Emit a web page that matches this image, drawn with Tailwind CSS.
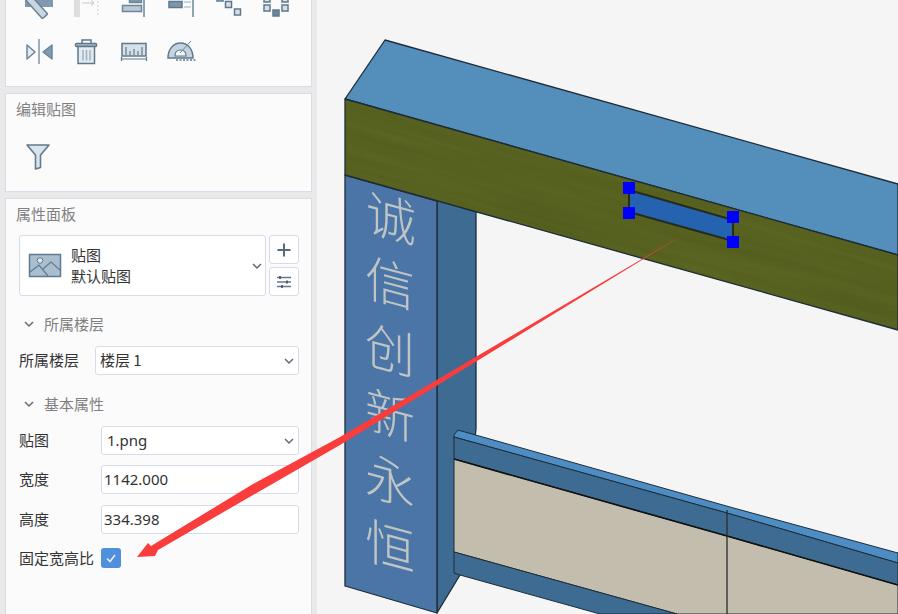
<!DOCTYPE html>
<html lang="zh">
<head>
<meta charset="utf-8">
<script src="https://cdn.jsdelivr.net/npm/@tailwindcss/browser@4"></script>
</head>
<body class="m-0 overflow-hidden">
<div class="flex w-[898px] h-[614px] overflow-hidden bg-[#f5f5f5] font-['Noto_Sans_CJK_SC','Noto_Sans',sans-serif] text-[15px] text-[#333]">
  <!-- left panels -->
  <aside class="w-[317px] shrink-0 h-full bg-[#e9e9e9] pl-[5px] pr-[5px] flex flex-col gap-[6px]">
    <section class="h-[87px] shrink-0 overflow-hidden bg-[#fbfbfc] border border-t-0 border-[#d6dce9]">
      <div class="-mt-[20px] pl-[9px] grid grid-cols-[repeat(6,47.5px)] auto-rows-[48px] place-items-center">
        <svg width="36" height="36" viewBox="21 -14 36 36" fill="none"><rect x="25" y="-3" width="28" height="10" fill="#7f9ab0"/><rect x="33" y="-5" width="7" height="25" rx="1" transform="rotate(-42 36 7)" fill="#c9d6e0" stroke="#6a8296" stroke-width="1.5"/></svg>
        <svg width="36" height="36" viewBox="68 -14 36 36" fill="none"><rect x="74" y="-3" width="6" height="20" fill="#dedede"/><path d="M82 3h12m-3-2.5 3 2.5-3 2.5" stroke="#c8c8c8"/><path d="M98 -3v20" stroke="#d0d0d0" stroke-dasharray="2 2"/></svg>
        <svg width="36" height="36" viewBox="115 -14 36 36" fill="none"><path d="M143 -3v20" stroke="#6d8699" stroke-width="1.5"/><rect x="121.500" y="5.500" width="19" height="6" fill="#b9c9d6" stroke="#6d8699" stroke-width="1.500"/><rect x="128.500" y="-3" width="12" height="5.500" fill="#7c97ad" stroke="#6d8699" stroke-width="1.500"/></svg>
        <svg width="36" height="36" viewBox="163 -14 36 36" fill="none"><rect x="169" y="1.500" width="13" height="6" fill="#7c97ad" stroke="#5f788c" stroke-width="1.500"/><path d="M184 2h7M184 7h7" stroke="#b9c9d6" stroke-width="1.500"/><path d="M193 -3v20" stroke="#6d8699" stroke-width="1.500"/></svg>
        <svg width="36" height="36" viewBox="211 -14 36 36" fill="none"><rect x="217" y="-4" width="6" height="5" fill="#d5e0e8" stroke="#5f788c" stroke-width="1.500"/><rect x="225.500" y="1.500" width="6" height="6" fill="#d5e0e8" stroke="#5f788c" stroke-width="1.500"/><rect x="234.500" y="9" width="6" height="6" fill="#d5e0e8" stroke="#5f788c" stroke-width="1.500"/></svg>
        <svg width="36" height="36" viewBox="258 -14 36 36" fill="none"><rect x="264" y="-4" width="6" height="6" fill="#d5e0e8" stroke="#5f788c" stroke-width="1.500"/><rect x="282" y="-4" width="6" height="6" fill="#d5e0e8" stroke="#5f788c" stroke-width="1.500"/><rect x="264" y="5" width="6" height="6" fill="#d5e0e8" stroke="#5f788c" stroke-width="1.500"/><rect x="282" y="5" width="6" height="6" fill="#d5e0e8" stroke="#5f788c" stroke-width="1.500"/><rect x="273" y="10" width="6" height="6" fill="#6d8699" stroke="#5f788c" stroke-width="1.500"/></svg>

        <svg width="36" height="36" viewBox="21 34 36 36" fill="none"><path d="M39 39v25" stroke="#7d96a9" stroke-width="1.500"/><path d="M27 45l8 7-8 7z" fill="#e4ebf0" stroke="#6d8699" stroke-width="1.500" stroke-linejoin="round"/><path d="M52 45l-9 7 9 7z" fill="#7f9ab0" stroke="#6d8699" stroke-width="1.500" stroke-linejoin="round"/></svg>
        <svg width="36" height="36" viewBox="68 34 36 36" fill="none"><path d="M82 43v-3h9v3" stroke="#5f788c" stroke-width="1.500"/><rect x="75.500" y="43.500" width="21" height="3" rx="1" fill="#a9bdcc" stroke="#5f788c" stroke-width="1.500"/><path d="M78 46.500h16.500v17h-16.500z" fill="#e2e9ef" stroke="#5f788c" stroke-width="1.500"/><path d="M83 50v10.500M86.500 50v10.500M90 50v10.500" stroke="#9db2c3" stroke-width="1.500"/></svg>
        <svg width="36" height="36" viewBox="116 34 36 36" fill="none"><rect x="122" y="43.500" width="24" height="12.500" fill="#d5e0e8" stroke="#5f788c" stroke-width="1.500"/><path d="M126 47v8M130 51v4M134 49v6M138 51v4M142 47v8" stroke="#5f788c" stroke-width="1.200"/><path d="M122 59h24M121.500 57v4M146.500 57v4" stroke="#5f788c" stroke-width="1.200"/></svg>
        <svg width="36" height="36" viewBox="163 34 36 36" fill="none"><path d="M168 58c0-9 5.500-15 12.500-15s12.500 6 12.500 15z" fill="#c4d3df" stroke="#5f788c" stroke-width="1.500"/><path d="M175 56c0-4 2.500-6 5.500-6s5.500 2 5.500 6z" fill="#f4f7f9" stroke="#5f788c" stroke-width="1.200"/><path d="M180 53l11-12" stroke="#6d8699"/><path d="M176 60h20" stroke="#5f788c" stroke-width="1.500" stroke-dasharray="2 1.500"/></svg>
      </div>
    </section>
    <section class="h-[99px] shrink-0 bg-[#fbfbfc] border border-[#d6dce9] pl-[10px] pt-[4px]">
      <h2 class="text-[15px] leading-[22px] font-normal text-[#808080]">编辑贴图</h2>
      <svg class="mt-[18px] ml-[4px]" width="36" height="36" viewBox="21 138 36 36" fill="none"><path d="M28 145h22l-8.500 10v12.500l-5 1.500v-14z" fill="#dbe4eb" stroke="#607a8e" stroke-width="1.600" stroke-linejoin="round"/></svg>
    </section>
    <section class="flex-1 bg-[#fbfbfc] border border-b-0 border-[#d6dce9] pl-[10px] pr-[12px] pt-[4px]">
      <h2 class="text-[15px] leading-[22px] font-normal text-[#808080]">属性面板</h2>
      <div class="mt-[10px] ml-[3px] flex gap-[3px]">
        <div class="w-[247px] h-[61px] shrink-0 bg-white border border-[#d6dce9] rounded-[3px] flex items-center pl-[8px] pr-[2px]">
          <svg width="34" height="26" viewBox="0 0 34 26" fill="none"><rect x="1.500" y="1.500" width="31" height="22" fill="#a9bfd0" stroke="#607a8e" stroke-width="1.500"/><circle cx="12" cy="7.500" r="2.800" fill="#dfe7ee" stroke="#607a8e"/><path d="M2 19l9-7 9 11M15 16l8-7 9 8" stroke="#607a8e" stroke-width="1.200"/></svg>
          <div class="ml-[9px] flex-1 leading-[21px] text-[15px] -mt-[1px]"><div>贴图</div><div>默认贴图</div></div>
          <svg width="12" height="12" viewBox="0 0 12 12" fill="none"><path d="M2 4l4 4 4-4" stroke="#667" stroke-width="1.500"/></svg>
        </div>
        <div class="flex flex-col gap-[3px]">
          <button class="w-[30px] h-[29px] bg-white border border-[#d6dce9] rounded-[3px] flex items-center justify-center"><svg width="16" height="16" viewBox="0 0 16 16" fill="none"><path d="M8 1.500v13M1.500 8h13" stroke="#566b7a" stroke-width="2"/></svg></button>
          <button class="w-[30px] h-[29px] bg-white border border-[#d6dce9] rounded-[3px] flex items-center justify-center"><svg width="16" height="14" viewBox="0 0 16 14" fill="none"><path d="M1 2.500h14M1 7h14M1 11.500h14" stroke="#607a8e" stroke-width="1.400"/><path d="M4 1v3M11 5.500v3M6 10v3" stroke="#445" stroke-width="1.500"/></svg></button>
        </div>
      </div>
      <div class="mt-[17px] flex items-center h-[22px] pl-[7px] text-[#808080]">
        <svg width="12" height="12" viewBox="0 0 12 12" fill="none"><path d="M2 4l4 4 4-4" stroke="#667" stroke-width="1.500"/></svg>
        <span class="ml-[9px]">所属楼层</span>
      </div>
      <div class="mt-[11px] flex items-center h-[29px] pl-[3px]">
        <label class="w-[76px] whitespace-nowrap">所属楼层</label>
        <div class="w-[204px] h-full bg-white border border-[#d6dce9] rounded-[3px] flex items-center justify-between pl-[4px] pr-[3px]"><span>楼层 1</span><svg width="12" height="12" viewBox="0 0 12 12" fill="none"><path d="M2 4l4 4 4-4" stroke="#667" stroke-width="1.500"/></svg></div>
      </div>
      <div class="mt-[18px] flex items-center h-[22px] pl-[7px] text-[#808080]">
        <svg width="12" height="12" viewBox="0 0 12 12" fill="none"><path d="M2 4l4 4 4-4" stroke="#667" stroke-width="1.500"/></svg>
        <span class="ml-[9px]">基本属性</span>
      </div>
      <div class="mt-[11px] flex items-center h-[29px] pl-[3px]">
        <label class="w-[82px]">贴图</label>
        <div class="w-[198px] h-full bg-white border border-[#d6dce9] rounded-[3px] flex items-center justify-between pl-[5px] pr-[3px]"><span class="font-['Noto_Sans']">1.png</span><svg width="12" height="12" viewBox="0 0 12 12" fill="none"><path d="M2 4l4 4 4-4" stroke="#667" stroke-width="1.500"/></svg></div>
      </div>
      <div class="mt-[10px] flex items-center h-[29px] pl-[3px]">
        <label class="w-[82px]">宽度</label>
        <div class="w-[198px] h-full bg-white border border-[#d6dce9] rounded-[3px] flex items-center pl-[2px] font-['Noto_Sans']">1142.000</div>
      </div>
      <div class="mt-[11px] flex items-center h-[29px] pl-[3px]">
        <label class="w-[82px]">高度</label>
        <div class="w-[198px] h-full bg-white border border-[#d6dce9] rounded-[3px] flex items-center pl-[2px] font-['Noto_Sans']">334.398</div>
      </div>
      <div class="mt-[14px] flex items-center h-[20px] pl-[3px]">
        <label class="w-[82px] whitespace-nowrap">固定宽高比</label>
        <div class="w-[20px] h-[20px] bg-[#4f8fdc] rounded-[3px] flex items-center justify-center"><svg width="12" height="12" viewBox="0 0 12 12" fill="none"><path d="M2 6.500l3 3 5-6.500" stroke="#e8f0fa" stroke-width="1.600"/></svg></div>
      </div>
    </section>
  </aside>
  <!-- 3D viewport -->
  <main class="relative flex-1 h-full">
    <svg class="absolute inset-0" width="581" height="614" viewBox="317 0 581 614" stroke-linejoin="round">
      <defs>
        <filter id="streak" x="0" y="0" width="1" height="1" color-interpolation-filters="sRGB">
          <feTurbulence type="fractalNoise" baseFrequency="0.006 0.12" numOctaves="3" seed="4"/>
          <feColorMatrix type="matrix" values="0 0 0 0 0.24  0 0 0 0 0.28  0 0 0 0 0.06  0.5 0 0 0 -0.12"/>
        </filter>
        <clipPath id="olive"><path d="M345 99L898 255V330L345 175Z"/></clipPath>
      </defs>
      <!-- column -->
      <path d="M437 200L476 212V429L460 575L437 613Z" fill="#3e6b92" stroke="#1e2c38" stroke-width="1.300"/>
      <path d="M345 175L437 201V613L345 586Z" fill="#4a75a6" stroke="#1e2c38" stroke-width="1.300"/>
      <g fill="#dcd9cc" font-size="50" font-family="'Noto Sans CJK SC',sans-serif" font-weight="300" text-anchor="middle" opacity=".8" class="blur-[0.6px]">
        <text transform="translate(391 219) skewY(15) translate(0 18)">诚</text>
        <text transform="translate(390 284) skewY(15) translate(0 18)">信</text>
        <text transform="translate(390 351) skewY(15) translate(0 18)">创</text>
        <text transform="translate(390 416) skewY(15) translate(0 18)">新</text>
        <text transform="translate(390 482) skewY(15) translate(0 18)">永</text>
        <text transform="translate(390 547) skewY(15) translate(0 18)">恒</text>
      </g>
      <!-- upper beam -->
      <path d="M345 99L385 40L898 184V255Z" fill="#548eba" stroke="#1e2c38" stroke-width="1.300"/>
      <path d="M345 99L898 255V330L345 175Z" fill="#5b6522"/>
      <g clip-path="url(#olive)"><rect x="300" y="0" width="660" height="260" transform="rotate(15.700 345 99)" filter="url(#streak)"/></g>
      <path d="M345 99L898 255V330L345 175Z" fill="none" stroke="#1e2c38" stroke-width="1.300"/>
      <!-- selected decal -->
      <path d="M629 190L733 220V241L629 212Z" fill="#2563b0" stroke="#252c1c" stroke-width="2"/>
      <g fill="#0000ff"><rect x="623" y="182" width="12" height="12"/><rect x="623" y="207" width="12" height="12"/><rect x="727" y="211" width="12" height="12"/><rect x="727" y="236" width="12" height="12"/></g>
      <!-- lower beam -->
      <path d="M454 435L458 430L730 507L898 553V563L727 513L454 437Z" fill="#4d8dc4" stroke="#1e2c38"/>
      <path d="M454 437L727 513L898 563V585L727 536L454 459Z" fill="#3e6b92" stroke="#1e2c38"/>
      <path d="M454 459L727 536L898 585V614H677L454 552Z" fill="#c3bdad" stroke="#1e2c38"/>
      <path d="M454 459L727 536L898 585" fill="none" stroke="#111" stroke-width="1.600"/>
      <path d="M454 552L677 614H600L460 575L454 573Z" fill="#3e6b92" stroke="#1e2c38"/>
      <path d="M727 510V614" stroke="#2b2b2b" stroke-width="1.300"/>
    </svg>
  </main>
  <!-- annotation arrow over everything -->
  <svg class="absolute inset-0 pointer-events-none" width="898" height="614" viewBox="0 0 898 614">
    <path d="M686 233L340 437L253 484L151 546L148 543L137 557L155 556L158 550L253 495L340 445Z" fill="#f93c3c"/>
  </svg>
</div>
</body>
</html>
